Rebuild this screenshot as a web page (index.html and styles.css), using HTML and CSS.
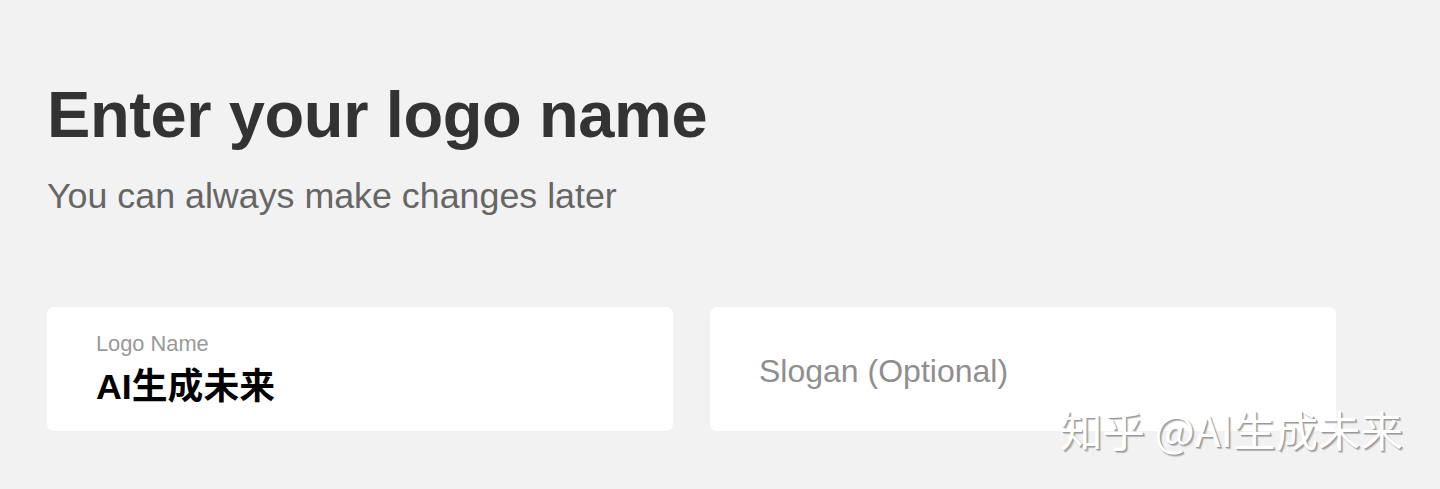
FILE: index.html
```html
<!DOCTYPE html>
<html lang="en">
<head>
<meta charset="utf-8">
<title>Enter your logo name</title>
<link rel="stylesheet" href="styles.css">
</head>
<body>
<main class="page">
  <h1 class="title">Enter your logo name</h1>
  <p class="subtitle">You can always make changes later</p>
  <div class="fields">
    <div class="field">
      <div class="field-label">Logo Name</div>
      <div class="field-value">AI生成未来</div>
    </div>
    <div class="field field-empty">
      <div class="field-placeholder">Slogan (Optional)</div>
    </div>
  </div>
</main>
<div class="watermark">知乎 @AI生成未来</div>
</body>
</html>
```

FILE: styles.css
```css
html, body {
  margin: 0;
  padding: 0;
  background: #f2f2f2;
  height: 100%;
  overflow: hidden;
}

body {
  font-family: "Liberation Sans", Arial, "Noto Sans CJK SC", sans-serif;
  position: relative;
}

.page {
  padding: 77px 0 0 47px;
}

.title {
  margin: 0;
  font-size: 65px;
  line-height: 76px;
  font-weight: 700;
  color: #333333;
  letter-spacing: -0.4px;
}

.subtitle {
  margin: 22px 0 0;
  font-size: 35.8px;
  line-height: 42px;
  color: #666666;
}

.fields {
  margin-top: 90px;
  display: grid;
  grid-template-columns: 626px 626px;
  column-gap: 37px;
}

.field {
  background: #ffffff;
  border-radius: 7px;
  height: 124px;
  box-sizing: border-box;
  padding: 25px 0 0 49px;
}

.field-label {
  font-size: 21.8px;
  line-height: 24px;
  color: #999999;
}

.field-value {
  margin-top: 11px;
  font-size: 35.8px;
  line-height: 40px;
  font-weight: 700;
  color: #000000;
}

.field-empty {
  padding-top: 46px;
  padding-left: 49px;
}

.field-placeholder {
  font-size: 32px;
  line-height: 37px;
  color: #8f8f8f;
}

.watermark {
  position: absolute;
  left: 1060px;
  top: 401px;
  font-family: "Noto Sans CJK SC", sans-serif;
  font-size: 42.5px;
  line-height: 56px;
  font-weight: 400;
  color: #ffffff;
  text-shadow: 1px 1px 0 #9a9a9a, 2px 2px 1px rgba(0,0,0,0.25);
  white-space: nowrap;
}
```
